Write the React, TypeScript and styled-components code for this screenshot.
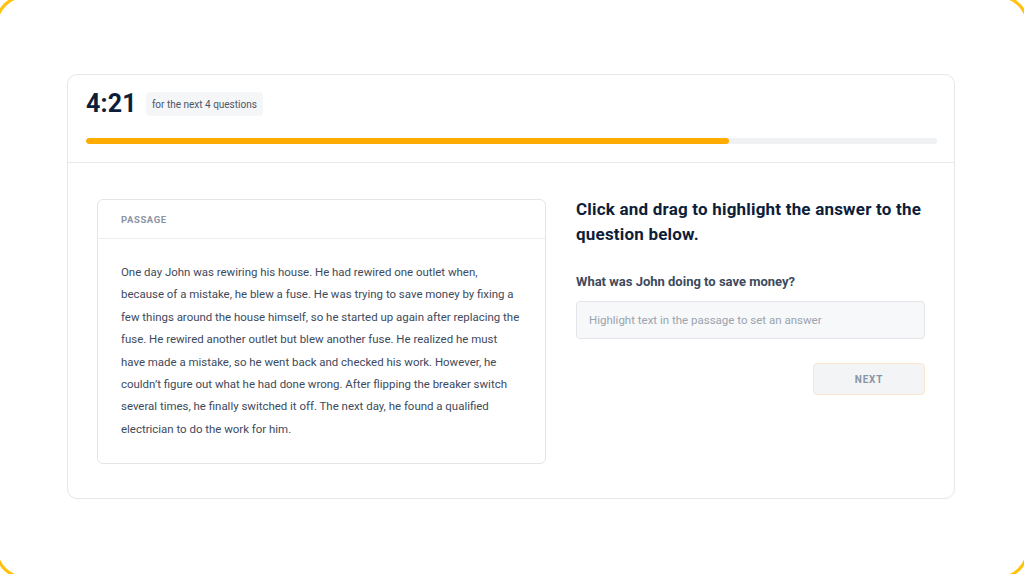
import React from "react";
import styled, { createGlobalStyle } from "styled-components";

const Global = createGlobalStyle`
  html, body { margin: 0; padding: 0; background: #ffffff; overflow: hidden; }
  body { font-family: "Roboto", "Noto Sans", sans-serif; -webkit-font-smoothing: antialiased; }
  * { box-sizing: border-box; }
`;

const Frame = styled.div`
  margin: -5px;
  height: calc(100vh + 10px);
  border: 3px solid #ffc20e;
  border-radius: 30px;
  display: flex;
  align-items: center;
  justify-content: center;
  background: #ffffff;
`;

const Card = styled.div`
  width: 888px;
  height: 425px;
  margin: -1px 0 0 -2px;
  border: 1px solid #e4e6ea;
  border-radius: 10px;
  background: #fff;
  display: flex;
  flex-direction: column;
`;

const Header = styled.div`
  padding: 17px 17px 18px 18px;
  border-bottom: 1px solid #e6e8ec;
  display: flex;
  flex-direction: column;
  gap: 22px;
`;

const TimerRow = styled.div`
  display: flex;
  align-items: center;
  gap: 9px;
`;

const Timer = styled.div`
  font-size: 25px;
  font-weight: 700;
  color: #0d1e3a;
  letter-spacing: 0.2px;
  line-height: 24px;
`;

const Badge = styled.div`
  background: #f5f6f8;
  border-radius: 4px;
  padding: 0 6px;
  height: 24px;
  display: flex;
  align-items: center;
  font-size: 10px;
  color: #4a5568;
`;

const Track = styled.div`
  height: 6px;
  border-radius: 3px;
  background: #f0f1f3;
  overflow: hidden;
`;

const Fill = styled.div`
  height: 100%;
  border-radius: 3px;
  background: #ffab00;
`;

const Body = styled.div`
  flex: 1;
  display: grid;
  grid-template-columns: 449px 1fr;
  gap: 30px;
  padding: 36px 29px 34px 29px;
`;

const Passage = styled.div`
  border: 1px solid #e3e5e9;
  border-radius: 6px;
  display: flex;
  flex-direction: column;
`;

const PassageHead = styled.div`
  height: 39px;
  padding: 0 23px;
  display: flex;
  align-items: center;
  border-bottom: 1px solid #eceef1;
  font-size: 9.5px;
  font-weight: 700;
  letter-spacing: 0.6px;
  color: #8a94a3;
`;

const PassageText = styled.p`
  margin: 0;
  padding: 22px 23px 0 23px;
  font-size: 11.45px;
  line-height: 22.4px;
  color: #3d4a5c;
`;

const Line = styled.span`
  display: block;
  white-space: nowrap;
`;

const Side = styled.div`
  display: flex;
  flex-direction: column;
`;

const Heading = styled.h2`
  margin: -2px 0 0 0;
  font-size: 17px;
  font-weight: 700;
  line-height: 25px;
  letter-spacing: 0.2px;
  color: #0d1e3a;
`;

const Question = styled.div`
  margin-top: 27px;
  font-size: 13px;
  line-height: 15px;
  font-weight: 700;
  color: #3d4a5c;
`;

const Answer = styled.div`
  margin-top: 12px;
  height: 38px;
  border: 1px solid #e3e5e9;
  border-radius: 4px;
  background: #f7f8fa;
  display: flex;
  align-items: center;
  padding: 0 12px;
  font-size: 11.5px;
  color: #9aa3ae;
`;

const Actions = styled.div`
  display: flex;
  justify-content: flex-end;
  margin-top: 24px;
`;

const NextButton = styled.button`
  width: 112px;
  height: 32px;
  border: 1px solid #fde6cf;
  border-radius: 4px;
  background: #f3f4f6;
  font-family: inherit;
  font-size: 10px;
  font-weight: 700;
  letter-spacing: 0.8px;
  color: #8a94a3;
  cursor: pointer;
`;

const passageLines = [
  "One day John was rewiring his house. He had rewired one outlet when,",
  "because of a mistake, he blew a fuse. He was trying to save money by fixing a",
  "few things around the house himself, so he started up again after replacing the",
  "fuse. He rewired another outlet but blew another fuse. He realized he must",
  "have made a mistake, so he went back and checked his work. However, he",
  "couldn\u2019t figure out what he had done wrong. After flipping the breaker switch",
  "several times, he finally switched it off. The next day, he found a qualified",
  "electrician to do the work for him.",
];

export default function App() {
  const progress = 75.6;
  return (
    <>
      <Global />
      <Frame>
        <Card>
          <Header>
            <TimerRow>
              <Timer>4:21</Timer>
              <Badge>for the next 4 questions</Badge>
            </TimerRow>
            <Track>
              <Fill style={{ width: `${progress}%` }} />
            </Track>
          </Header>
          <Body>
            <Passage>
              <PassageHead>PASSAGE</PassageHead>
              <PassageText>
                {passageLines.map((l, i) => (
                  <Line key={i}>{l}</Line>
                ))}
              </PassageText>
            </Passage>
            <Side>
              <Heading>Click and drag to highlight the answer to the question below.</Heading>
              <Question>What was John doing to save money?</Question>
              <Answer>Highlight text in the passage to set an answer</Answer>
              <Actions>
                <NextButton>NEXT</NextButton>
              </Actions>
            </Side>
          </Body>
        </Card>
      </Frame>
    </>
  );
}
